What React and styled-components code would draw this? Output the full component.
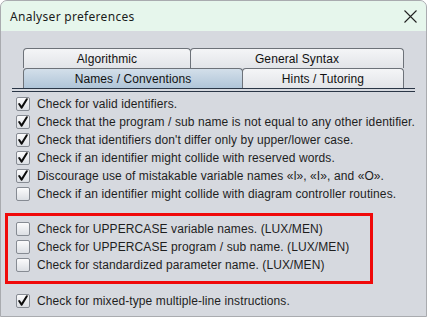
import React from 'react';
import styled, { createGlobalStyle } from 'styled-components';

const GlobalStyle = createGlobalStyle`
  html, body {
    margin: 0;
    padding: 0;
    background: #ffffff;
  }
  * {
    box-sizing: border-box;
  }
`;

const Window = styled.div`
  width: 427px;
  height: 317px;
  display: flex;
  flex-direction: column;
  border: 1px solid #a9abaf;
  border-radius: 7px 7px 0 0;
  overflow: hidden;
  background: #d6d9df;
`;

const TitleBar = styled.div`
  height: 30px;
  flex: none;
  display: flex;
  align-items: center;
  justify-content: space-between;
  padding: 0 8px 0 9px;
  background: #e6f6ec;
  font-family: "Noto Sans", "Open Sans", sans-serif;
  font-size: 12px;
  letter-spacing: 0.3px;
  color: #1b1b1b;
`;

const CloseButton = styled.div`
  width: 16px;
  height: 16px;
  display: flex;
  align-items: center;
  justify-content: center;
`;

const Body = styled.div`
  flex: 1;
  padding: 17px 11px 0 11px;
  font-family: "Liberation Sans", Arial, sans-serif;
  font-size: 12px;
  letter-spacing: 0.1px;
  color: #1e1e1e;
`;

const TabRow = styled.div`
  display: flex;
  height: ${(p) => p.$height}px;
  padding-left: 11px;
  border-bottom: ${(p) => (p.$front ? '1px solid #2a3646' : 'none')};
`;

const Tab = styled.div`
  width: ${(p) => p.$width}px;
  height: 100%;
  display: flex;
  align-items: center;
  justify-content: center;
  border: 1px solid #6d7279;
  border-bottom: none;
  border-radius: 4px 4px 0 0;
  margin-right: -1px;
  background: ${(p) =>
    p.$selected
      ? 'linear-gradient(#d3dfea, #b0c5d8)'
      : 'linear-gradient(#f4f5f7, #e2e4e8)'};
  color: #111;
  padding-top: 1px;
`;

const Content = styled.div`
  margin-top: 2px;
  border-top: 1px solid #2a3646;
  padding: 3px 0 0 4px;
`;

const Row = styled.div`
  height: 18px;
  display: flex;
  align-items: center;
  gap: 7px;
  white-space: nowrap;
`;

const Box = styled.div`
  width: 14px;
  height: 14px;
  flex: none;
  border: 1px solid #868b93;
  border-radius: 2px;
  background: linear-gradient(#fbfbfc, #dcdfe4);
  display: flex;
  align-items: center;
  justify-content: center;
`;

const Highlight = styled.div`
  margin: 10px 0 0 -11px;
  width: 368px;
  border: 3px solid #f00a0a;
  padding: 4px 0 7px 8px;
`;

const LastGroup = styled.div`
  margin-top: 8px;
`;

function Check() {
  return (
    <svg width="12" height="12" viewBox="0 0 12 12">
      <path d="M2.2 6 L4.6 9.6 L9.8 1.2" fill="none" stroke="#0d0d0d" strokeWidth="2" strokeLinecap="round" strokeLinejoin="round" />
    </svg>
  );
}

function CheckRow({ checked, children }) {
  return (
    <Row>
      <Box>{checked && <Check />}</Box>
      <span>{children}</span>
    </Row>
  );
}

export default function App() {
  return (
    <>
      <GlobalStyle />
      <Window>
        <TitleBar>
          <span>Analyser preferences</span>
          <CloseButton>
            <svg width="15" height="15" viewBox="0 0 15 15">
              <path d="M1.5 1.5 L13.5 13.5 M13.5 1.5 L1.5 13.5" stroke="#222" strokeWidth="1.1" />
            </svg>
          </CloseButton>
        </TitleBar>
        <Body>
          <TabRow $height={20}>
            <Tab $width={168}>Algorithmic</Tab>
            <Tab $width={214}>General Syntax</Tab>
          </TabRow>
          <TabRow $height={21} $front>
            <Tab $width={220} $selected>Names / Conventions</Tab>
            <Tab $width={162}>Hints / Tutoring</Tab>
          </TabRow>
          <Content>
            <CheckRow checked>Check for valid identifiers.</CheckRow>
            <CheckRow checked>Check that the program / sub name is not equal to any other identifier.</CheckRow>
            <CheckRow checked>Check that identifiers don't differ only by upper/lower case.</CheckRow>
            <CheckRow checked>Check if an identifier might collide with reserved words.</CheckRow>
            <CheckRow checked>Discourage use of mistakable variable names «l», «I», and «O».</CheckRow>
            <CheckRow>Check if an identifier might collide with diagram controller routines.</CheckRow>
            <Highlight>
              <CheckRow>Check for UPPERCASE variable names. (LUX/MEN)</CheckRow>
              <CheckRow>Check for UPPERCASE program / sub name. (LUX/MEN)</CheckRow>
              <CheckRow>Check for standardized parameter name. (LUX/MEN)</CheckRow>
            </Highlight>
            <LastGroup>
              <CheckRow checked>Check for mixed-type multiple-line instructions.</CheckRow>
            </LastGroup>
          </Content>
        </Body>
      </Window>
    </>
  );
}
